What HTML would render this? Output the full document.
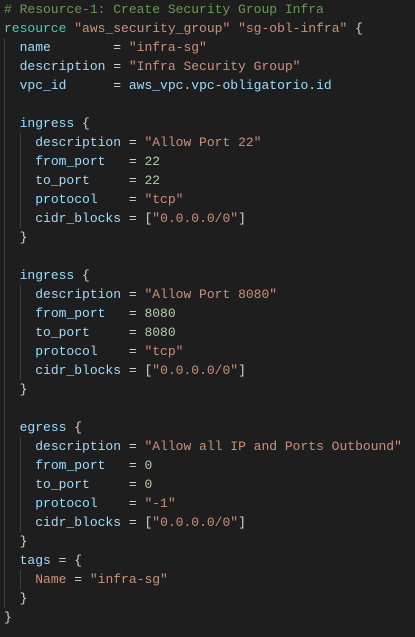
<!DOCTYPE html><html><head><style>
body{margin:0;background:#1e1e1e;width:415px;height:637px;overflow:hidden;position:relative}
pre{margin:0;padding:0 0 0 4px;font-family:"Liberation Mono",monospace;font-size:13px;line-height:19px;color:#d4d4d4}
.c{color:#6a9955}.k{color:#4ec9b0}.s{color:#ce9178}.a{color:#9cdcfe}.n{color:#b5cea8}
.g{position:absolute;width:1px;background:#404040}
</style></head><body>
<div class="g" style="left:4px;top:38px;height:570px"></div>
<div class="g" style="left:20px;top:133px;height:95px"></div>
<div class="g" style="left:20px;top:285px;height:95px"></div>
<div class="g" style="left:20px;top:437px;height:95px"></div>
<div class="g" style="left:20px;top:570px;height:19px"></div>
<pre><span class="c"># Resource-1: Create Security Group Infra</span>
<span class="k">resource</span> <span class="s">"aws_security_group"</span> <span class="s">"sg-obl-infra"</span> {
  <span class="a">name</span>        = <span class="s">"infra-sg"</span>
  <span class="a">description</span> = <span class="s">"Infra Security Group"</span>
  <span class="a">vpc_id</span>      = <span class="a">aws_vpc</span>.<span class="a">vpc-obligatorio</span>.<span class="a">id</span>

  <span class="a">ingress</span> {
    <span class="a">description</span> = <span class="s">"Allow Port 22"</span>
    <span class="a">from_port</span>   = <span class="n">22</span>
    <span class="a">to_port</span>     = <span class="n">22</span>
    <span class="a">protocol</span>    = <span class="s">"tcp"</span>
    <span class="a">cidr_blocks</span> = [<span class="s">"0.0.0.0/0"</span>]
  }

  <span class="a">ingress</span> {
    <span class="a">description</span> = <span class="s">"Allow Port 8080"</span>
    <span class="a">from_port</span>   = <span class="n">8080</span>
    <span class="a">to_port</span>     = <span class="n">8080</span>
    <span class="a">protocol</span>    = <span class="s">"tcp"</span>
    <span class="a">cidr_blocks</span> = [<span class="s">"0.0.0.0/0"</span>]
  }

  <span class="a">egress</span> {
    <span class="a">description</span> = <span class="s">"Allow all IP and Ports Outbound"</span>
    <span class="a">from_port</span>   = <span class="n">0</span>
    <span class="a">to_port</span>     = <span class="n">0</span>
    <span class="a">protocol</span>    = <span class="s">"-1"</span>
    <span class="a">cidr_blocks</span> = [<span class="s">"0.0.0.0/0"</span>]
  }
  <span class="a">tags</span> = {
    <span class="s">Name</span> = <span class="s">"infra-sg"</span>
  }
}</pre>
</body></html>
